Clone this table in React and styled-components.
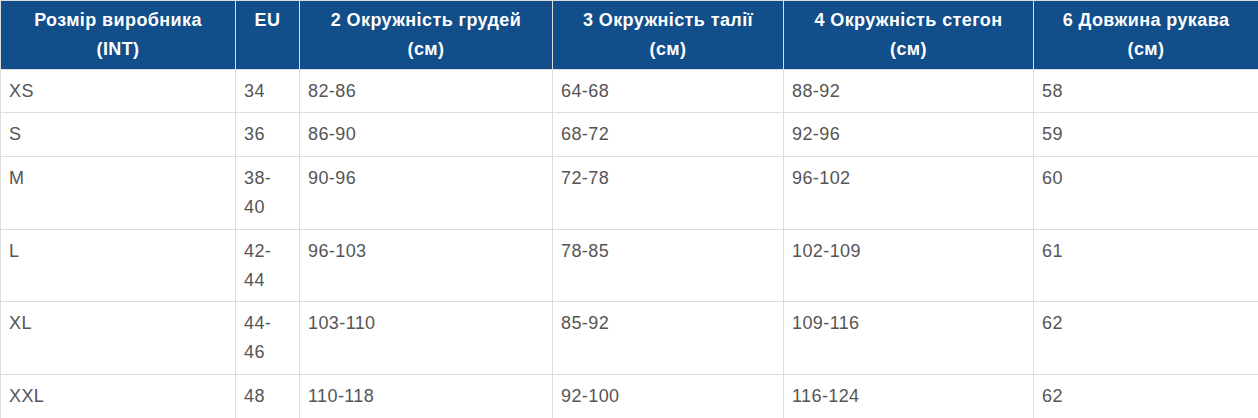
import React from "react";
import styled, { createGlobalStyle } from "styled-components";

const GlobalStyle = createGlobalStyle`
  html, body { margin: 0; padding: 0; background: #fff; }
  body { font-family: "Liberation Sans", Arial, sans-serif; }
`;

const Table = styled.table`
  width: 1258px;
  border-collapse: collapse;
  table-layout: fixed;
  font-family: "Liberation Sans", Arial, sans-serif;
  font-size: 18px;
  letter-spacing: 0.4px;
  line-height: 28.8px;
  border: 1px solid #dddddd;
`;

const HeadCell = styled.th`
  background: #124e8a;
  color: #ffffff;
  font-weight: bold;
  text-align: center;
  vertical-align: top;
  padding: 5px 8px;
  border: 1px solid #dddddd;
`;

const Cell = styled.td`
  color: #555555;
  text-align: left;
  vertical-align: top;
  padding: 7px 8px;
  border: 1px solid #dddddd;
  word-wrap: break-word;
`;

const widths = [235, 64, 253, 231, 250, 225];

const headers = [
  ["Розмір виробника", "(INT)"],
  ["EU"],
  ["2 Окружність грудей", "(см)"],
  ["3 Окружність талії", "(см)"],
  ["4 Окружність стегон", "(см)"],
  ["6 Довжина рукава", "(см)"],
];

const rows = [
  ["XS", "34", "82-86", "64-68", "88-92", "58"],
  ["S", "36", "86-90", "68-72", "92-96", "59"],
  ["M", "38-40", "90-96", "72-78", "96-102", "60"],
  ["L", "42-44", "96-103", "78-85", "102-109", "61"],
  ["XL", "44-46", "103-110", "85-92", "109-116", "62"],
  ["XXL", "48", "110-118", "92-100", "116-124", "62"],
];

export default function App() {
  return (
    <>
      <GlobalStyle />
      <Table>
        <colgroup>
          {widths.map((w, i) => (
            <col key={i} style={{ width: w }} />
          ))}
        </colgroup>
        <thead>
          <tr>
            {headers.map((h, i) => (
              <HeadCell key={i}>
                {h.map((line, j) => (
                  <React.Fragment key={j}>
                    {j > 0 && <br />}
                    {line}
                  </React.Fragment>
                ))}
              </HeadCell>
            ))}
          </tr>
        </thead>
        <tbody>
          {rows.map((r, i) => (
            <tr key={i}>
              {r.map((c, j) => (
                <Cell key={j}>{c}</Cell>
              ))}
            </tr>
          ))}
        </tbody>
      </Table>
    </>
  );
}
